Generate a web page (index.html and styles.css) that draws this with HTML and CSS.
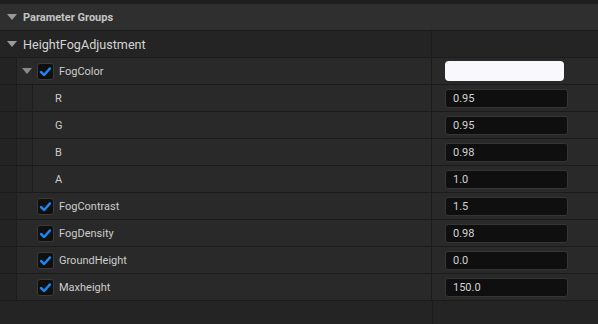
FILE: index.html
```html
<!DOCTYPE html>
<html>
<head>
<meta charset="utf-8">
<link rel="stylesheet" href="styles.css">
</head>
<body>
<div class="panel">
  <div class="topstrip"></div>
  <div class="header">
    <span class="tri"></span>
    <span class="header-title">Parameter Groups</span>
  </div>
  <div class="row group">
    <div class="name-cell"><span class="tri"></span><span class="group-title">HeightFogAdjustment</span></div>
    <div class="value-cell"></div>
  </div>

  <div class="row">
    <div class="gutter"></div>
    <div class="name-cell item"><span class="tri small"></span><span class="cb"><svg viewBox="0 0 17 17" width="17" height="17"><path d="M4 9 L7.2 12 L13 5.4" fill="none" stroke="#1c86f2" stroke-width="2.4" stroke-linecap="round" stroke-linejoin="round"/></svg></span><span class="label">FogColor</span></div>
    <div class="value-cell"><div class="swatch"></div></div>
  </div>

  <div class="row">
    <div class="gutter"></div>
    <div class="gutter inner"></div>
    <div class="name-cell sub"><span class="label">R</span></div>
    <div class="value-cell"><div class="input">0.95</div></div>
  </div>
  <div class="row">
    <div class="gutter"></div>
    <div class="gutter inner"></div>
    <div class="name-cell sub"><span class="label">G</span></div>
    <div class="value-cell"><div class="input">0.95</div></div>
  </div>
  <div class="row">
    <div class="gutter"></div>
    <div class="gutter inner"></div>
    <div class="name-cell sub"><span class="label">B</span></div>
    <div class="value-cell"><div class="input">0.98</div></div>
  </div>
  <div class="row">
    <div class="gutter"></div>
    <div class="gutter inner"></div>
    <div class="name-cell sub"><span class="label">A</span></div>
    <div class="value-cell"><div class="input">1.0</div></div>
  </div>

  <div class="row">
    <div class="gutter"></div>
    <div class="name-cell item leaf"><span class="cb"><svg viewBox="0 0 17 17" width="17" height="17"><path d="M4 9 L7.2 12 L13 5.4" fill="none" stroke="#1c86f2" stroke-width="2.4" stroke-linecap="round" stroke-linejoin="round"/></svg></span><span class="label">FogContrast</span></div>
    <div class="value-cell"><div class="input">1.5</div></div>
  </div>
  <div class="row">
    <div class="gutter"></div>
    <div class="name-cell item leaf"><span class="cb"><svg viewBox="0 0 17 17" width="17" height="17"><path d="M4 9 L7.2 12 L13 5.4" fill="none" stroke="#1c86f2" stroke-width="2.4" stroke-linecap="round" stroke-linejoin="round"/></svg></span><span class="label">FogDensity</span></div>
    <div class="value-cell"><div class="input">0.98</div></div>
  </div>
  <div class="row">
    <div class="gutter"></div>
    <div class="name-cell item leaf"><span class="cb"><svg viewBox="0 0 17 17" width="17" height="17"><path d="M4 9 L7.2 12 L13 5.4" fill="none" stroke="#1c86f2" stroke-width="2.4" stroke-linecap="round" stroke-linejoin="round"/></svg></span><span class="label">GroundHeight</span></div>
    <div class="value-cell"><div class="input">0.0</div></div>
  </div>
  <div class="row">
    <div class="gutter"></div>
    <div class="name-cell item leaf"><span class="cb"><svg viewBox="0 0 17 17" width="17" height="17"><path d="M4 9 L7.2 12 L13 5.4" fill="none" stroke="#1c86f2" stroke-width="2.4" stroke-linecap="round" stroke-linejoin="round"/></svg></span><span class="label">Maxheight</span></div>
    <div class="value-cell"><div class="input">150.0</div></div>
  </div>

  <div class="filler">
    <div class="filler-name"></div>
    <div class="filler-value"></div>
  </div>
</div>
</body>
</html>
```
FILE: styles.css
```css
html, body {
  margin: 0;
  padding: 0;
  background: #242424;
}
body {
  width: 598px;
  height: 324px;
  overflow: hidden;
  font-family: Roboto, "Liberation Sans", sans-serif;
}
.panel {
  display: flex;
  flex-direction: column;
  height: 324px;
}
.topstrip {
  height: 4px;
  background: #1f1f1f;
}
.header {
  height: 26px;
  background: #2f2f2f;
  border-bottom: 1px solid #1b1b1b;
  display: flex;
  align-items: center;
}
.tri {
  width: 0;
  height: 0;
  border-left: 5px solid transparent;
  border-right: 5px solid transparent;
  border-top: 6px solid #9a9a9a;
  margin-left: 7px;
  margin-right: 6px;
}
.header-title {
  font-size: 11px;
  font-weight: bold;
  color: #c4c4c4;
}
.row {
  height: 26px;
  border-bottom: 1px solid #1b1b1b;
  display: flex;
  background: #292929;
}
.row.group {
  background: #242424;
}
.group-title {
  font-size: 12.6px;
  color: #d4d4d4;
}
.gutter {
  width: 16px;
  background: #232323;
  border-right: 1px solid #1d1d1d;
  flex: none;
}
.gutter.inner {
  width: 15px;
  background: #272727;
}
.name-cell {
  width: 432px;
  flex: none;
  display: flex;
  align-items: center;
  border-right: 1px solid #1b1b1b;
  box-sizing: border-box;
}
.row .gutter + .name-cell {
  width: 415px;
}
.row .gutter + .gutter + .name-cell {
  width: 399px;
}
.tri.small {
  margin-left: 5px;
  margin-right: 5px;
  border-top-color: #8a8a8a;
}
.name-cell.leaf {
  padding-left: 20px;
}
.name-cell.sub {
  padding-left: 22px;
}
.cb {
  width: 17px;
  height: 17px;
  box-sizing: border-box;
  background: #0f0f0f;
  border: 1px solid #3a3a3a;
  border-radius: 3px;
  display: flex;
  align-items: center;
  justify-content: center;
  margin-right: 5px;
}
.cb svg {
  display: block;
  flex: none;
}
.label {
  font-size: 11px;
  color: #cccccc;
}
.value-cell {
  flex: 1;
  display: flex;
  align-items: center;
  padding-left: 13px;
}
.swatch {
  width: 119px;
  height: 20px;
  background: #f8f8fd;
  border-radius: 4px;
}
.input {
  width: 123px;
  height: 19px;
  box-sizing: border-box;
  background: #0f0f0f;
  border: 1px solid #353535;
  border-radius: 3px;
  font-size: 11px;
  color: #d2d2d2;
  padding-left: 7px;
  display: flex;
  align-items: center;
}
.filler {
  flex: 1;
  display: flex;
  background: #242424;
}
.filler-name {
  width: 432px;
  border-right: 1px solid #1b1b1b;
}
```
